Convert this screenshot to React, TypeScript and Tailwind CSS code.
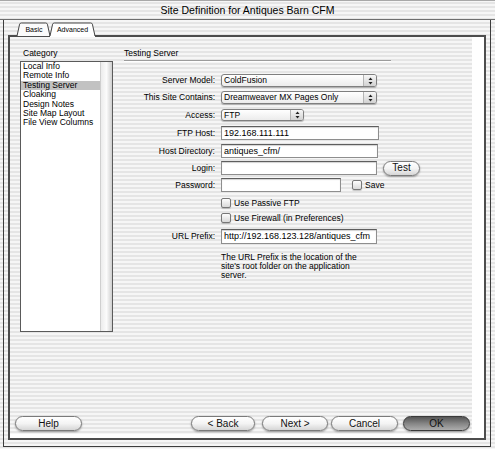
const stripes =
  'bg-[repeating-linear-gradient(to_bottom,#f6f6f6_0px,#f6f6f6_2px,#e5e5e5_2px,#e5e5e5_4px)]';

const categories = [
  'Local Info',
  'Remote Info',
  'Testing Server',
  'Cloaking',
  'Design Notes',
  'Site Map Layout',
  'File View Columns',
];

function Arrows() {
  return (
    <svg width="5" height="8" viewBox="0 0 5 8">
      <path d="M2.5 0.5 L4.5 3 L0.5 3 Z" fill="#222" />
      <path d="M2.5 7.5 L4.5 5 L0.5 5 Z" fill="#222" />
    </svg>
  );
}

function PopUp({ value, className }: { value: string; className: string }) {
  return (
    <div
      className={`flex items-stretch overflow-hidden rounded-[3px] border border-[#7f7f7f] bg-gradient-to-b from-white to-[#ececec] shadow-[0_1px_1px_rgba(0,0,0,0.25)] ${className}`}
    >
      <div className="flex-1 flex items-center pl-[2px] text-[8.5px] leading-none whitespace-nowrap overflow-hidden">
        {value}
      </div>
      <div className="w-[13px] flex items-center justify-center border-l border-[#b4b4b4] bg-gradient-to-b from-[#f7f7f7] to-[#d2d2d2]">
        <Arrows />
      </div>
    </div>
  );
}

function Field({ value = '', className }: { value?: string; className: string }) {
  return (
    <div
      className={`flex items-center overflow-hidden border border-[#8e8e8e] border-t-[#5e5e5e] bg-white shadow-[inset_0_1px_1px_rgba(0,0,0,0.18)] pl-[2px] text-[9px] leading-none whitespace-nowrap ${className}`}
    >
      {value}
    </div>
  );
}

function Check() {
  return (
    <div className="w-[10px] h-[10px] rounded-[2px] border border-[#777] bg-gradient-to-b from-[#fdfdfd] to-[#d9d9d9] shadow-[0_1px_1px_rgba(0,0,0,0.2)]" />
  );
}

function Pill({
  label,
  className,
  primary = false,
}: {
  label: string;
  className: string;
  primary?: boolean;
}) {
  const look = primary
    ? 'border-[#3a3a3a] bg-gradient-to-b from-[#565656] via-[#858585] to-[#adadad]'
    : 'border-[#7a7a7a] bg-gradient-to-b from-white via-[#f4f4f4] to-[#d6d6d6]';
  return (
    <button
      type="button"
      className={`h-[15px] rounded-full border ${look} shadow-[0_1px_2px_rgba(0,0,0,0.35)] flex items-center justify-center text-[10px] leading-none text-[#111] ${className}`}
    >
      {label}
    </button>
  );
}

function Row({
  label,
  className,
  children,
}: {
  label: string;
  className: string;
  children: React.ReactNode;
}) {
  return (
    <div className={`flex items-center gap-[6px] ${className}`}>
      <div className="w-[91px] text-right text-[8.5px] leading-none whitespace-nowrap">{label}</div>
      {children}
    </div>
  );
}

function Tabs() {
  return (
    <div className="relative z-10 w-[92px] h-[15px] -mb-[2px]">
      <svg className="absolute inset-0" width="92" height="15" viewBox="0 0 92 15">
        <path
          d="M9 14 L11.6 2.2 Q12 1 13.3 1 L37.7 1 Q39 1 39.4 2.2 L42 14"
          fill="#fbfbfb"
          stroke="#444"
          strokeWidth="1"
        />
        <path d="M42 15 L42 14 L44.6 2.2 Q45 1 46.3 1 L82.7 1 Q84 1 84.4 2.2 L87 14 L87 15 Z" fill="#fff" />
        <path
          d="M42 14 L44.6 2.2 Q45 1 46.3 1 L82.7 1 Q84 1 84.4 2.2 L87 14"
          fill="none"
          stroke="#444"
          strokeWidth="1"
        />
      </svg>
      <span className="absolute left-[13px] w-[26px] top-[4px] text-center text-[7px] leading-none">Basic</span>
      <span className="absolute left-[46px] w-[37px] top-[4px] text-center text-[7px] leading-none">Advanced</span>
    </div>
  );
}

export default function App() {
  return (
    <div
      className={`w-[495px] h-[449px] overflow-hidden ${stripes} font-['Liberation_Sans',Arial,sans-serif] text-black`}
    >
      <div className="h-[20px] border-t border-[#a8a8a8] border-b border-b-[#6e6e6e] flex items-center justify-center text-[10.5px] leading-none">
        Site Definition for Antiques Barn CFM
      </div>
      <div className="ml-[3px] w-[488px] h-[427px] border-x border-b border-[#3d3d3d] pl-[4px] pt-[2px]">
        <Tabs />
        <div className="w-[478px] h-[405px] border-2 border-[#4d4d4d] bg-white">
          <div className={`w-[462px] h-[397px] ${stripes} flex flex-col`}>
            <div className="flex-1 flex">
              <div className="pl-[10px] pt-[11px]">
                <div className="ml-[3px] h-[10px] text-[8.5px] leading-[10px]">Category</div>
                <div className="mt-[3px] w-[93px] h-[271px] border border-[#5a5a5a] bg-white flex">
                  <div className="flex-1">
                    {categories.map((c) => (
                      <div
                        key={c}
                        className={`h-[9.4px] pl-[2px] text-[8.5px] leading-[9.4px] whitespace-nowrap ${
                          c === 'Testing Server' ? 'bg-[#c2c2c2]' : ''
                        }`}
                      >
                        {c}
                      </div>
                    ))}
                  </div>
                  <div className="w-[12px] border-l border-[#cfcfcf] bg-gradient-to-r from-[#ececec] via-[#fbfbfb] to-[#cfcfcf]" />
                </div>
              </div>
              <div className="ml-[11px] pt-[11px]">
                <div className="h-[10px] text-[8.5px] leading-[10px]">Testing Server</div>
                <div className="mt-[2px] w-[267px] border-t border-[#9c9c9c] border-b border-b-white" />
                <Row label="Server Model:" className="mt-[12px] h-[13px]">
                  <PopUp value="ColdFusion" className="w-[156px] h-[13px]" />
                </Row>
                <Row label="This Site Contains:" className="mt-[4px] h-[13px]">
                  <PopUp value="Dreamweaver MX Pages Only" className="w-[156px] h-[13px]" />
                </Row>
                <Row label="Access:" className="mt-[5px] h-[12px]">
                  <PopUp value="FTP" className="w-[83px] h-[12px]" />
                </Row>
                <Row label="FTP Host:" className="mt-[5px] h-[14px]">
                  <Field value="192.168.111.111" className="w-[158px] h-[14px]" />
                </Row>
                <Row label="Host Directory:" className="mt-[4px] h-[14px]">
                  <Field value="antiques_cfm/" className="w-[157px] h-[14px]" />
                </Row>
                <Row label="Login:" className="mt-[3px] h-[14px]">
                  <Field className="w-[156px] h-[14px]" />
                  <Pill label="Test" className="ml-[0px] w-[37px]" />
                </Row>
                <Row label="Password:" className="mt-[3px] h-[14px]">
                  <Field className="w-[120px] h-[14px]" />
                  <div className="ml-[5px] flex items-center gap-[3px]">
                    <Check />
                    <span className="text-[8.5px] leading-none">Save</span>
                  </div>
                </Row>
                <div className="mt-[6px] h-[10px] pl-[97px] flex items-center gap-[3px]">
                  <Check />
                  <span className="text-[8.5px] leading-none">Use Passive FTP</span>
                </div>
                <div className="mt-[5px] h-[10px] pl-[97px] flex items-center gap-[3px]">
                  <Check />
                  <span className="text-[8.5px] leading-none">Use Firewall (in Preferences)</span>
                </div>
                <Row label="URL Prefix:" className="mt-[6px] h-[15px]">
                  <Field value="http://192.168.123.128/antiques_cfm" className="w-[156px] h-[15px]" />
                </Row>
                <div className="mt-[9px] pl-[97px] text-[8.5px] leading-[8.8px]">
                  <div>The URL Prefix is the location of the</div>
                  <div>site's root folder on the application</div>
                  <div>server.</div>
                </div>
              </div>
            </div>
            <div className="h-[15px] mb-[3px] pl-[5px] pr-[2px] flex items-center">
              <Pill label="Help" className="w-[67px]" />
              <div className="flex-1" />
              <Pill label="< Back" className="w-[64px]" />
              <Pill label="Next >" className="ml-[7px] w-[66px]" />
              <Pill label="Cancel" className="ml-[3px] w-[67px]" />
              <Pill label="OK" primary className="ml-[5px] w-[67px]" />
            </div>
          </div>
        </div>
      </div>
    </div>
  );
}
